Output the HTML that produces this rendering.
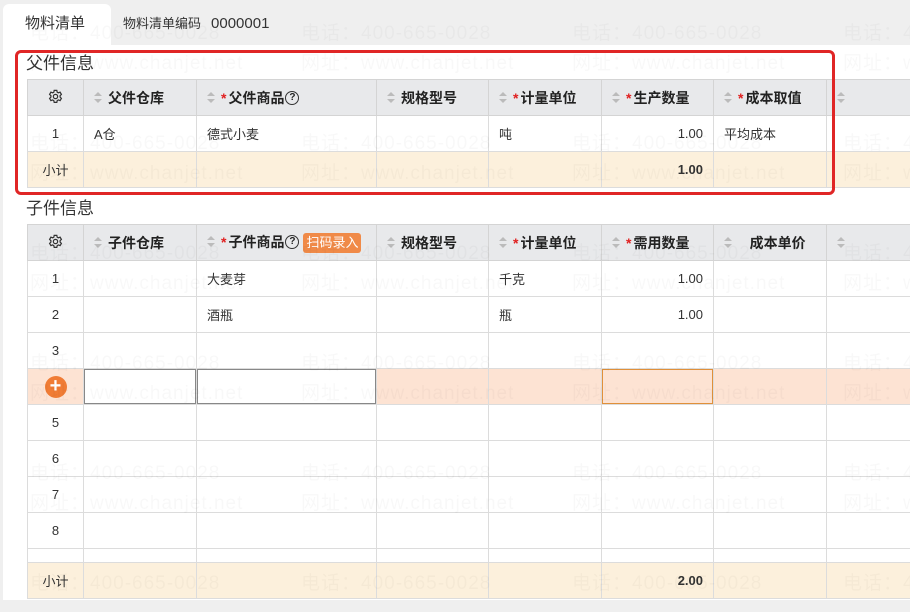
<!DOCTYPE html>
<html><head><meta charset="utf-8"><style>
*{box-sizing:border-box;margin:0;padding:0}
html,body{width:910px;height:612px;overflow:hidden}
body{background:#efefef;font-family:"Liberation Sans","Noto Sans CJK SC",sans-serif;color:#333;position:relative}
.panel{position:absolute;left:3px;top:45px;width:907px;height:555px;background:#fff}
.tab{position:absolute;left:3px;top:4px;width:108px;height:42px;background:#fff;border-radius:6px 6px 0 0;font-size:15px;line-height:40px;padding-left:22px;color:#333}
.code{position:absolute;left:123px;top:13px;font-size:13px;color:#333}
.code b{font-weight:normal;font-size:15px;margin-left:10px}
.title{position:absolute;left:26px;font-size:17px;color:#333}
table{position:absolute;left:27px;border-collapse:collapse;table-layout:fixed;width:900px;font-size:13px}
td{border:1px solid #dcdcdc;height:36px;padding:0 10px;white-space:nowrap;overflow:hidden}
tr.h td{background:#e8e9eb;font-weight:bold;color:#222;border-color:#d4d4d4;font-size:14px}
tr.s td{background:#fcf0dc}
tr.o td{background:#fde3d3}
.c{text-align:center}.r{text-align:right}
.sa{display:inline-block;width:8px;height:12px;vertical-align:-1px;margin-right:6px;position:relative}
.sa:before{content:"";position:absolute;left:0;top:0;border:4px solid transparent;border-bottom:4px solid #bbb;border-top:0}
.sa:after{content:"";position:absolute;left:0;top:7px;border:4px solid transparent;border-top:4px solid #bbb;border-bottom:0}
.st{color:#e02020;margin-right:2px}
.q{display:inline-block;width:14px;height:14px;border:1.5px solid #333;border-radius:50%;font-size:10px;line-height:11px;text-align:center;vertical-align:middle;margin-left:1px;position:relative;top:-1px}
.scan{display:inline-block;background:#f08a48;color:#fff;font-weight:normal;border-radius:3px;padding:0 3px;font-size:13px;line-height:20px;margin-left:4px}
.plus{display:inline-block;width:22px;height:22px;border-radius:50%;background:#f07c35;color:#fff;font-size:20px;line-height:21px;text-align:center;font-weight:bold}
.box{position:absolute;left:15px;top:50px;width:820px;height:145px;border:3px solid #e02626;border-radius:6px}
.wm{position:absolute;font-size:19px;color:rgba(0,0,0,0.028);white-space:nowrap;letter-spacing:1px;pointer-events:none}
.ib{box-shadow:inset 0 0 0 1px #888;background:#fff !important}
.io{box-shadow:inset 0 0 0 1px #e0903a}
</style></head><body>
<div class="panel"></div>
<div class="tab">物料清单</div>
<div class="code">物料清单编码<b>0000001</b></div>
<div class="title" style="top:49px">父件信息</div>
<div class="title" style="top:194px">子件信息</div>
<table style="top:79px">
<colgroup><col style="width:56px"><col style="width:113px"><col style="width:180px"><col style="width:112px"><col style="width:113px"><col style="width:112px"><col style="width:113px"><col style="width:101px"></colgroup>
<tr class="h"><td class="c"><svg width="15" height="15" viewBox="0 0 16 16" fill="none" stroke="#333" stroke-width="1.3"><path d="M6.6 1.5h2.8l.4 1.9 1.3.7 1.8-.7 1.4 2.4-1.4 1.3v1.6l1.4 1.3-1.4 2.4-1.8-.7-1.3.7-.4 1.9H6.6l-.4-1.9-1.3-.7-1.8.7-1.4-2.4 1.4-1.3V7.1L1.7 5.8l1.4-2.4 1.8.7 1.3-.7z"/><circle cx="8" cy="8" r="2.3"/></svg></td><td><span class="sa"></span>父件仓库</td><td><span class="sa"></span><span class="st">*</span>父件商品<span class="q">?</span></td><td><span class="sa"></span>规格型号</td><td><span class="sa"></span><span class="st">*</span>计量单位</td><td><span class="sa"></span><span class="st">*</span>生产数量</td><td><span class="sa"></span><span class="st">*</span>成本取值</td><td><span class="sa"></span></td></tr>
<tr style="height:35px"><td class="c">1</td><td>A仓</td><td>德式小麦</td><td></td><td>吨</td><td class="r">1.00</td><td>平均成本</td><td></td></tr>
<tr class="s"><td class="c">小计</td><td></td><td></td><td></td><td></td><td class="r"><b>1.00</b></td><td></td><td></td></tr>
</table>
<table style="top:224px">
<colgroup><col style="width:56px"><col style="width:113px"><col style="width:180px"><col style="width:112px"><col style="width:113px"><col style="width:112px"><col style="width:113px"><col style="width:101px"></colgroup>
<tr class="h"><td class="c"><svg width="15" height="15" viewBox="0 0 16 16" fill="none" stroke="#333" stroke-width="1.3"><path d="M6.6 1.5h2.8l.4 1.9 1.3.7 1.8-.7 1.4 2.4-1.4 1.3v1.6l1.4 1.3-1.4 2.4-1.8-.7-1.3.7-.4 1.9H6.6l-.4-1.9-1.3-.7-1.8.7-1.4-2.4 1.4-1.3V7.1L1.7 5.8l1.4-2.4 1.8.7 1.3-.7z"/><circle cx="8" cy="8" r="2.3"/></svg></td><td><span class="sa"></span>子件仓库</td><td><span class="sa"></span><span class="st">*</span>子件商品<span class="q">?</span><span class="scan">扫码录入</span></td><td><span class="sa"></span>规格型号</td><td><span class="sa"></span><span class="st">*</span>计量单位</td><td><span class="sa"></span><span class="st">*</span>需用数量</td><td><span class="sa"></span>&nbsp;&nbsp;&nbsp;成本单价</td><td><span class="sa"></span></td></tr>
<tr><td class="c">1</td><td></td><td>大麦芽</td><td></td><td>千克</td><td class="r">1.00</td><td></td><td></td></tr>
<tr><td class="c">2</td><td></td><td>酒瓶</td><td></td><td>瓶</td><td class="r">1.00</td><td></td><td></td></tr>
<tr><td class="c">3</td><td></td><td></td><td></td><td></td><td></td><td></td><td></td></tr>
<tr class="o"><td class="c" style="padding:0"><span class="plus">+</span></td><td class="ib"></td><td class="ib"></td><td></td><td></td><td class="io"></td><td></td><td></td></tr>
<tr><td class="c">5</td><td></td><td></td><td></td><td></td><td></td><td></td><td></td></tr>
<tr><td class="c">6</td><td></td><td></td><td></td><td></td><td></td><td></td><td></td></tr>
<tr><td class="c">7</td><td></td><td></td><td></td><td></td><td></td><td></td><td></td></tr>
<tr><td class="c">8</td><td></td><td></td><td></td><td></td><td></td><td></td><td></td></tr>
<tr style="height:14px"><td style="height:14px"></td><td style="height:14px"></td><td style="height:14px"></td><td style="height:14px"></td><td style="height:14px"></td><td style="height:14px"></td><td style="height:14px"></td><td style="height:14px"></td></tr>
<tr class="s"><td class="c">小计</td><td></td><td></td><td></td><td></td><td class="r"><b>2.00</b></td><td></td><td></td></tr>
</table>
<div class="box"></div>
<div class="wm" style="left:30px;top:18px">电话：400-665-0028</div>
<div class="wm" style="left:301px;top:18px">电话：400-665-0028</div>
<div class="wm" style="left:572px;top:18px">电话：400-665-0028</div>
<div class="wm" style="left:843px;top:18px">电话：400-665-0028</div>
<div class="wm" style="left:30px;top:48px">网址：www.chanjet.net</div>
<div class="wm" style="left:301px;top:48px">网址：www.chanjet.net</div>
<div class="wm" style="left:572px;top:48px">网址：www.chanjet.net</div>
<div class="wm" style="left:843px;top:48px">网址：www.chanjet.net</div>
<div class="wm" style="left:30px;top:128px">电话：400-665-0028</div>
<div class="wm" style="left:301px;top:128px">电话：400-665-0028</div>
<div class="wm" style="left:572px;top:128px">电话：400-665-0028</div>
<div class="wm" style="left:843px;top:128px">电话：400-665-0028</div>
<div class="wm" style="left:30px;top:158px">网址：www.chanjet.net</div>
<div class="wm" style="left:301px;top:158px">网址：www.chanjet.net</div>
<div class="wm" style="left:572px;top:158px">网址：www.chanjet.net</div>
<div class="wm" style="left:843px;top:158px">网址：www.chanjet.net</div>
<div class="wm" style="left:30px;top:238px">电话：400-665-0028</div>
<div class="wm" style="left:301px;top:238px">电话：400-665-0028</div>
<div class="wm" style="left:572px;top:238px">电话：400-665-0028</div>
<div class="wm" style="left:843px;top:238px">电话：400-665-0028</div>
<div class="wm" style="left:30px;top:268px">网址：www.chanjet.net</div>
<div class="wm" style="left:301px;top:268px">网址：www.chanjet.net</div>
<div class="wm" style="left:572px;top:268px">网址：www.chanjet.net</div>
<div class="wm" style="left:843px;top:268px">网址：www.chanjet.net</div>
<div class="wm" style="left:30px;top:348px">电话：400-665-0028</div>
<div class="wm" style="left:301px;top:348px">电话：400-665-0028</div>
<div class="wm" style="left:572px;top:348px">电话：400-665-0028</div>
<div class="wm" style="left:843px;top:348px">电话：400-665-0028</div>
<div class="wm" style="left:30px;top:378px">网址：www.chanjet.net</div>
<div class="wm" style="left:301px;top:378px">网址：www.chanjet.net</div>
<div class="wm" style="left:572px;top:378px">网址：www.chanjet.net</div>
<div class="wm" style="left:843px;top:378px">网址：www.chanjet.net</div>
<div class="wm" style="left:30px;top:458px">电话：400-665-0028</div>
<div class="wm" style="left:301px;top:458px">电话：400-665-0028</div>
<div class="wm" style="left:572px;top:458px">电话：400-665-0028</div>
<div class="wm" style="left:843px;top:458px">电话：400-665-0028</div>
<div class="wm" style="left:30px;top:488px">网址：www.chanjet.net</div>
<div class="wm" style="left:301px;top:488px">网址：www.chanjet.net</div>
<div class="wm" style="left:572px;top:488px">网址：www.chanjet.net</div>
<div class="wm" style="left:843px;top:488px">网址：www.chanjet.net</div>
<div class="wm" style="left:30px;top:568px">电话：400-665-0028</div>
<div class="wm" style="left:301px;top:568px">电话：400-665-0028</div>
<div class="wm" style="left:572px;top:568px">电话：400-665-0028</div>
<div class="wm" style="left:843px;top:568px">电话：400-665-0028</div>
</body></html>
